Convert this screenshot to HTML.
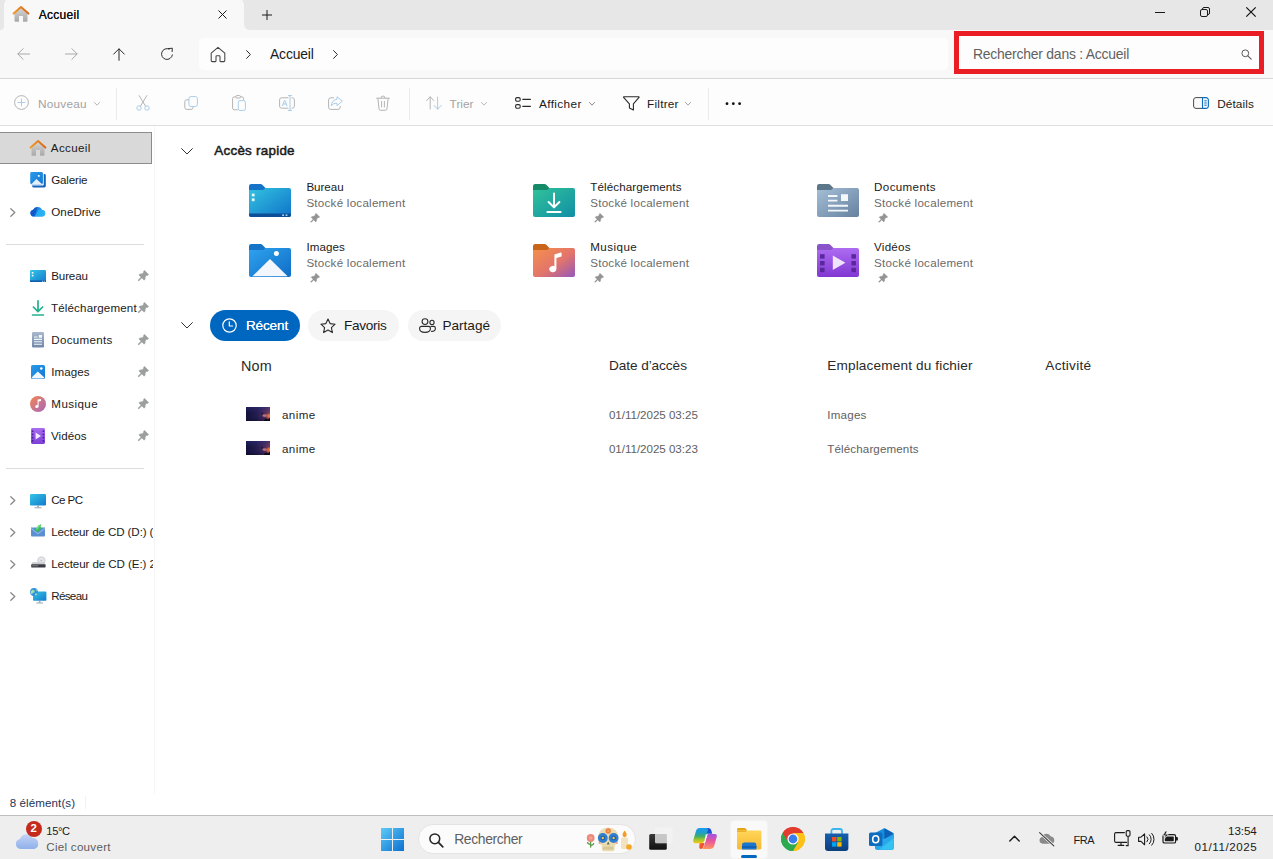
<!DOCTYPE html>
<html lang="fr">
<head>
<meta charset="utf-8">
<title>Accueil</title>
<style>
*{box-sizing:border-box;margin:0;padding:0}
html,body{width:1273px;height:859px;overflow:hidden;background:#fff}
body{font-family:"Liberation Sans",sans-serif;color:#1a1a1a;position:relative;font-size:12px}
.abs{position:absolute}
.t{position:absolute;white-space:nowrap;line-height:1}
svg{position:absolute;overflow:visible}
/* regions */
#titlebar{left:0;top:0;width:1273px;height:30px;background:#e7e7e7}
#tab{left:4px;top:-2px;width:240px;height:32px;background:#f8f8f8;border-radius:7px 7px 0 0}
#tabLs{left:0;top:25px;width:4px;height:5px;background:#f8f8f8}
#tabLc{left:-4px;top:20px;width:8px;height:9.5px;background:#e7e7e7;border-radius:0 0 4px 0}
#tabRs{left:244px;top:24px;width:6px;height:6px;background:#f8f8f8}
#tabRc{left:244px;top:17.5px;width:12px;height:12px;background:#e7e7e7;border-radius:0 0 0 6px}
#addr{left:0;top:30px;width:1273px;height:48px;background:#f8f8f8}
#addrline{left:0;top:78px;width:1273px;height:1px;background:#d6d6d6}
#addrbox{left:199px;top:38px;width:749px;height:31.5px;background:#fdfdfd;border-radius:5px}
#search{left:954px;top:31px;width:310px;height:43px;background:#ea1c24}
#searchin{left:959px;top:36px;width:300px;height:33.2px;background:#fdfdfd}
#cmd{left:0;top:79px;width:1273px;height:46px;background:#fdfdfd}
#cmdline{left:0;top:125px;width:1273px;height:1px;background:#dedede}
.vsep{position:absolute;width:1px;background:#ebebeb;top:88px;height:32px}
#nav{left:0;top:126px;width:153px;height:668px;background:#fff}
#navline{left:154px;top:126px;width:1px;height:670px;background:#f5f5f5}
#sel{left:0;top:132px;width:152px;height:32px;background:#d9d9d9;border:1px solid #8c8c8c;border-left:none}
.hsep{position:absolute;left:6px;width:138px;height:1px;background:#dcdcdc}
.ct{font-size:11.8px}
.mt{font-size:11.6px;color:#1a1a1a}
.st{font-size:11.6px;color:#6a6a6a}
.hd{font-size:13.6px;color:#2a2a2a}
.rt{font-size:11.6px;color:#616161}
.nt{font-size:11.6px;color:#1a1a1a}
#status{left:0;top:794px;width:1273px;height:20px;background:#fff}
#taskbar{left:0;top:816px;width:1273px;height:43px;background:#eeeeee}
#taskline{left:0;top:815px;width:1273px;height:1px;background:#bebebe}
</style>
</head>
<body>
<div class="abs" id="titlebar"></div>
<div class="abs" id="tab"></div>
<div class="abs" id="tabLs"></div><div class="abs" id="tabLc"></div>
<div class="abs" id="tabRs"></div><div class="abs" id="tabRc"></div>
<div class="abs" id="addr"></div>
<div class="abs" id="addrline"></div>
<div class="abs" id="addrbox"></div>
<div class="abs" id="search"></div><div class="abs" id="searchin"></div>
<div class="abs" id="cmd"></div>
<div class="abs" id="cmdline"></div>
<div class="abs" id="nav"></div>
<div class="abs" id="navline"></div>
<div class="abs" id="sel"></div>
<div class="abs" id="status"></div>
<div class="abs" id="taskline"></div>
<div class="abs" id="taskbar"></div>

<!-- TITLEBAR CONTENT -->
<svg style="left:12px;top:5px" width="18" height="18" viewBox="0 0 18 18">
  <defs><linearGradient id="hg" x1="0" y1="0" x2="0" y2="1"><stop offset="0" stop-color="#d6d6d6"/><stop offset="1" stop-color="#a9a9a9"/></linearGradient>
  <linearGradient id="ho" x1="0" y1="0" x2="1" y2="0"><stop offset="0" stop-color="#f09a2a"/><stop offset="1" stop-color="#d9661a"/></linearGradient></defs>
  <path d="M2.5 8.2 L9 2.6 L15.5 8.2 V16 a0.8 0.8 0 0 1 -0.8 0.8 H11 V11 H7 V16.8 H3.3 a0.8 0.8 0 0 1 -0.8 -0.8 Z" fill="url(#hg)"/>
  <path d="M1.6 8.6 L9 2.1 L16.4 8.6" fill="none" stroke="url(#ho)" stroke-width="2" stroke-linecap="round" stroke-linejoin="round"/>
</svg>
<div class="t" id="tabtxt" style="left:38.8px;top:9px;font-size:12px;color:#111;text-shadow:0 0 0.3px #111;letter-spacing:0.27px">Accueil</div>
<svg style="left:218px;top:10px" width="9" height="9" viewBox="0 0 9 9"><path d="M0.5 0.5 L8.5 8.5 M8.5 0.5 L0.5 8.5" stroke="#1a1a1a" stroke-width="1" fill="none"/></svg>
<svg style="left:262px;top:10px" width="10" height="10" viewBox="0 0 10 10"><path d="M5 0 V10 M0 5 H10" stroke="#1a1a1a" stroke-width="1" fill="none"/></svg>
<svg style="left:1155px;top:12px" width="10" height="1" viewBox="0 0 10 1"><path d="M0 0.5 H10" stroke="#1a1a1a" stroke-width="1"/></svg>
<svg style="left:1200px;top:7px" width="10" height="10" viewBox="0 0 10 10"><rect x="0.5" y="2.5" width="7" height="7" rx="1.5" fill="none" stroke="#1a1a1a"/><path d="M2.5 2.5 V2 a1.5 1.5 0 0 1 1.5 -1.5 H8 a1.5 1.5 0 0 1 1.5 1.5 V6 a1.5 1.5 0 0 1 -1.5 1.5 H7.5" fill="none" stroke="#1a1a1a"/></svg>
<svg style="left:1246px;top:7px" width="10" height="10" viewBox="0 0 10 10"><path d="M0.3 0.3 L9.7 9.7 M9.7 0.3 L0.3 9.7" stroke="#111" stroke-width="1.2" fill="none"/></svg>
<!-- ADDRESS CONTENT -->
<svg style="left:16.5px;top:47.5px" width="13" height="12" viewBox="0 0 13 12"><path d="M12.5 6 H1 M6.1 0.7 L0.8 6 L6.1 11.3" fill="none" stroke="#a8a8a8" stroke-width="1" stroke-linecap="round" stroke-linejoin="round"/></svg>
<svg style="left:64.5px;top:47.5px" width="13" height="12" viewBox="0 0 13 12"><path d="M0.5 6 H12 M6.9 0.7 L12.2 6 L6.9 11.3" fill="none" stroke="#a8a8a8" stroke-width="1" stroke-linecap="round" stroke-linejoin="round"/></svg>
<svg style="left:112.5px;top:48px" width="12" height="13" viewBox="0 0 12 13"><path d="M6 12.3 V1 M0.7 6.1 L6 0.8 L11.3 6.1" fill="none" stroke="#262626" stroke-width="1" stroke-linecap="round" stroke-linejoin="round"/></svg>
<svg style="left:160px;top:47px" width="14" height="14" viewBox="0 0 14 14"><path d="M12.4 7.9 A5.45 5.45 0 1 1 9.2 2" fill="none" stroke="#2e2e2e" stroke-width="1" stroke-linecap="round"/><path d="M8.4 1.6 L12.3 1.2 L12.1 4.6" fill="none" stroke="#2e2e2e" stroke-width="1" stroke-linecap="round" stroke-linejoin="round"/></svg>
<svg style="left:210px;top:46px" width="16" height="17" viewBox="0 0 16 17"><path d="M1.2 7.2 L8 1.4 L14.8 7.2 V14.6 a1 1 0 0 1 -1 1 H10.6 a0.6 0.6 0 0 1 -0.6 -0.6 V10.6 a0.8 0.8 0 0 0 -0.8 -0.8 H6.8 a0.8 0.8 0 0 0 -0.8 0.8 V15 a0.6 0.6 0 0 1 -0.6 0.6 H2.2 a1 1 0 0 1 -1 -1 Z" fill="none" stroke="#444" stroke-width="1.05" stroke-linejoin="round"/></svg>
<svg style="left:246px;top:50px" width="5" height="9" viewBox="0 0 5 9"><path d="M0.6 0.6 L4.4 4.5 L0.6 8.4" fill="none" stroke="#2a2a2a" stroke-width="1" stroke-linecap="round" stroke-linejoin="round"/></svg>
<div class="t" id="addrtxt" style="left:270.0px;top:48px;font-size:13.9px;color:#1a1a1a;letter-spacing:-0.15px">Accueil</div>
<svg style="left:333px;top:50px" width="5" height="9" viewBox="0 0 5 9"><path d="M0.6 0.6 L4.4 4.5 L0.6 8.4" fill="none" stroke="#2a2a2a" stroke-width="1" stroke-linecap="round" stroke-linejoin="round"/></svg>
<div class="t" id="srchtxt" style="left:973.0px;top:48px;font-size:13.9px;color:#616161;letter-spacing:-0.21px">Rechercher dans : Accueil</div>
<svg style="left:1240.5px;top:49px" width="11" height="11" viewBox="0 0 11 11"><circle cx="4.3" cy="4.3" r="3.4" fill="none" stroke="#5a5a5a" stroke-width="1"/><path d="M6.8 6.8 L10.2 10.2" stroke="#5a5a5a" stroke-width="1.1" stroke-linecap="round"/></svg>
<!-- COMMAND CONTENT -->
<svg style="left:14px;top:95px" width="15" height="15" viewBox="0 0 15 15"><circle cx="7.5" cy="7.5" r="6.9" fill="none" stroke="#b4b4b4" stroke-width="1"/><path d="M7.5 4 V11 M4 7.5 H11" stroke="#a9cdea" stroke-width="1" stroke-linecap="round"/></svg>
<div class="t ct" id="c1" style="left:37.9px;top:99px;color:#a3a3a3;letter-spacing:0.24px">Nouveau</div>
<svg class="chv" style="left:93.5px;top:101.5px" width="6" height="4" viewBox="0 0 6 4"><path d="M0.5 0.5 L3 3.2 L5.5 0.5" fill="none" stroke="#b0b0b0" stroke-width="0.9" stroke-linecap="round" stroke-linejoin="round"/></svg>
<div class="vsep" style="left:116px"></div>
<!-- cut -->
<svg style="left:136px;top:95px" width="14" height="16" viewBox="0 0 14 16"><path d="M3.2 0.6 L9.6 11.3 M10.8 0.6 L4.4 11.3" fill="none" stroke="#b4b4b4" stroke-width="1" stroke-linecap="round"/><circle cx="3" cy="13" r="2.2" fill="none" stroke="#a9cdea" stroke-width="1"/><circle cx="11" cy="13" r="2.2" fill="none" stroke="#a9cdea" stroke-width="1"/></svg>
<!-- copy -->
<svg style="left:184px;top:96px" width="14" height="14" viewBox="0 0 14 14"><path d="M4.6 3.8 H2.8 a2 2 0 0 0 -2 2 V11.4 a2 2 0 0 0 2 2 H7 a2 2 0 0 0 2 -2 V10.8" fill="none" stroke="#b4b4b4" stroke-width="1" stroke-linecap="round"/><rect x="4.9" y="0.6" width="8.5" height="9.9" rx="2" fill="none" stroke="#a9cdea" stroke-width="1"/></svg>
<!-- paste -->
<svg style="left:232px;top:95px" width="14" height="16" viewBox="0 0 14 16"><path d="M5.4 14.8 H2.3 a1.7 1.7 0 0 1 -1.7 -1.7 V3.6 a1.7 1.7 0 0 1 1.7 -1.7 H3.6 M8.6 1.9 H9.9 a1.7 1.7 0 0 1 1.7 1.7 V4.6" fill="none" stroke="#b4b4b4" stroke-width="1" stroke-linecap="round"/><rect x="3.7" y="0.6" width="4.8" height="2.4" rx="1.1" fill="none" stroke="#b4b4b4" stroke-width="1"/><rect x="6.3" y="5.6" width="7.1" height="9.8" rx="1.7" fill="none" stroke="#a9cdea" stroke-width="1"/></svg>
<!-- rename -->
<svg style="left:279px;top:95px" width="16" height="16" viewBox="0 0 16 16"><path d="M9 2.8 H2.6 a2 2 0 0 0 -2 2 V11.2 a2 2 0 0 0 2 2 H9 M13 2.8 H13.4 a2 2 0 0 1 2 2 V11.2 a2 2 0 0 1 -2 2 H13" fill="none" stroke="#b4b4b4" stroke-width="1" stroke-linecap="round"/><path d="M11 0.6 V15.4 M9.3 0.6 H12.7 M9.3 15.4 H12.7" fill="none" stroke="#a9cdea" stroke-width="1" stroke-linecap="round"/><path d="M3.4 10.8 L5.7 5.2 L8 10.8 M4.2 9 H7.2" fill="none" stroke="#a9cdea" stroke-width="1" stroke-linecap="round" stroke-linejoin="round"/></svg>
<!-- share -->
<svg style="left:328px;top:96px" width="15" height="14" viewBox="0 0 15 14"><path d="M5.6 1.8 H2.8 a2.2 2.2 0 0 0 -2.2 2.2 V11.2 a2.2 2.2 0 0 0 2.2 2.2 H10 a2.2 2.2 0 0 0 2.2 -2.2 V10.4" fill="none" stroke="#b4b4b4" stroke-width="1" stroke-linecap="round"/><path d="M9 0.7 L14.3 5.2 L9 9.7 V7.3 C6.2 7.1 4.4 8.1 3.2 10 C3.4 6.2 5.6 3.7 9 3.3 Z" fill="none" stroke="#a9cdea" stroke-width="1" stroke-linejoin="round"/></svg>
<!-- delete -->
<svg style="left:376px;top:95px" width="14" height="16" viewBox="0 0 14 16"><path d="M0.6 3.2 H13.4 M5 3 a2 2 0 0 1 4 0 M1.9 3.4 L3 13.8 a1.7 1.7 0 0 0 1.7 1.5 H9.3 a1.7 1.7 0 0 0 1.7 -1.5 L12.1 3.4 M5.6 6.4 V12 M8.4 6.4 V12" fill="none" stroke="#b4b4b4" stroke-width="1" stroke-linecap="round" stroke-linejoin="round"/></svg>
<div class="vsep" style="left:409px"></div>
<!-- sort -->
<svg style="left:426px;top:96px" width="16" height="14" viewBox="0 0 16 14"><path d="M4.2 13 V1 M0.6 4.6 L4.2 0.8 L7.8 4.6" fill="none" stroke="#b4b4b4" stroke-width="1" stroke-linecap="round" stroke-linejoin="round"/><path d="M11.6 1 V13 M8 9.4 L11.6 13.2 L15.2 9.4" fill="none" stroke="#a9cdea" stroke-width="1" stroke-linecap="round" stroke-linejoin="round"/></svg>
<div class="t ct" id="c2" style="left:449.6px;top:99px;color:#a3a3a3;letter-spacing:0.02px">Trier</div>
<svg class="chv" style="left:480.5px;top:101.5px" width="6" height="4" viewBox="0 0 6 4"><path d="M0.5 0.5 L3 3.2 L5.5 0.5" fill="none" stroke="#b0b0b0" stroke-width="0.9" stroke-linecap="round" stroke-linejoin="round"/></svg>
<!-- view -->
<svg style="left:515px;top:97px" width="16" height="12" viewBox="0 0 16 12"><rect x="0.6" y="0.6" width="4.6" height="3.6" rx="1.4" fill="none" stroke="#2a2a2a" stroke-width="1.1"/><rect x="0.6" y="7.6" width="4.6" height="3.6" rx="1.4" fill="none" stroke="#2a2a2a" stroke-width="1.1"/><path d="M7.8 2.4 H15.4 M7.8 9.4 H15.4" stroke="#2a2a2a" stroke-width="1.1" stroke-linecap="round"/></svg>
<div class="t ct" id="c3" style="left:539.1px;top:99px;color:#1a1a1a;letter-spacing:0.35px">Afficher</div>
<svg class="chv" style="left:588.5px;top:101.5px" width="6" height="4" viewBox="0 0 6 4"><path d="M0.5 0.5 L3 3.2 L5.5 0.5" fill="none" stroke="#7a7a7a" stroke-width="0.9" stroke-linecap="round" stroke-linejoin="round"/></svg>
<!-- filter -->
<svg style="left:623px;top:96px" width="17" height="15" viewBox="0 0 17 15"><path d="M0.9 0.7 H15.7 a0.4 0.4 0 0 1 0.3 0.7 L10.4 7.8 V14 L6.4 12 V7.8 L0.6 1.4 a0.4 0.4 0 0 1 0.3 -0.7 Z" fill="none" stroke="#2a2a2a" stroke-width="1.1" stroke-linejoin="round"/></svg>
<div class="t ct" id="c4" style="left:647.1px;top:99px;color:#1a1a1a;letter-spacing:0.21px">Filtrer</div>
<svg class="chv" style="left:685px;top:101.5px" width="6" height="4" viewBox="0 0 6 4"><path d="M0.5 0.5 L3 3.2 L5.5 0.5" fill="none" stroke="#9a9a9a" stroke-width="0.9" stroke-linecap="round" stroke-linejoin="round"/></svg>
<div class="vsep" style="left:708px"></div>
<svg style="left:725px;top:102px" width="17" height="4" viewBox="0 0 17 4"><circle cx="2" cy="1.7" r="1.4" fill="#111"/><circle cx="8.3" cy="1.7" r="1.4" fill="#111"/><circle cx="14.6" cy="1.7" r="1.4" fill="#111"/></svg>
<!-- details -->
<svg style="left:1193px;top:97px" width="16" height="12" viewBox="0 0 16 12"><path d="M9.5 0.6 H3 a2.4 2.4 0 0 0 -2.4 2.4 V9 a2.4 2.4 0 0 0 2.4 2.4 H9.5" fill="#fafafa" stroke="#4a4a4a" stroke-width="1"/><path d="M9.5 0.6 H13 a2.4 2.4 0 0 1 2.4 2.4 V9 a2.4 2.4 0 0 1 -2.4 2.4 H9.5 Z" fill="#f2f8fd" stroke="#0f6cbd" stroke-width="1.1"/><path d="M11.3 3.8 H13.7 M11.3 6 H13.7 M11.3 8.2 H13.7" stroke="#0f6cbd" stroke-width="1"/></svg>
<div class="t ct" id="c5" style="left:1217.2px;top:99px;color:#1a1a1a;letter-spacing:0.09px">Détails</div>
<!-- NAV CONTENT -->
<svg width="0" height="0" style="position:absolute"><defs>
<linearGradient id="gBlue" x1="0" y1="0" x2="1" y2="1"><stop offset="0" stop-color="#35c6e6"/><stop offset="1" stop-color="#1279cf"/></linearGradient>
<linearGradient id="gImg" x1="0" y1="0" x2="1" y2="1"><stop offset="0" stop-color="#2a9bea"/><stop offset="1" stop-color="#1276d2"/></linearGradient>
<linearGradient id="gMus" x1="0" y1="0" x2="1" y2="1"><stop offset="0" stop-color="#f4874c"/><stop offset="1" stop-color="#a665c4"/></linearGradient>
<linearGradient id="gVid" x1="0" y1="0" x2="0" y2="1"><stop offset="0" stop-color="#a86df0"/><stop offset="1" stop-color="#7b3fd6"/></linearGradient>
<linearGradient id="gDoc" x1="0" y1="0" x2="0" y2="1"><stop offset="0" stop-color="#a9b8cc"/><stop offset="1" stop-color="#7188a8"/></linearGradient>
<linearGradient id="gGrn" x1="0" y1="0" x2="1" y2="1"><stop offset="0" stop-color="#2cc09a"/><stop offset="1" stop-color="#128a78"/></linearGradient>
<linearGradient id="gCloud2" x1="0" y1="0" x2="1" y2="0"><stop offset="0" stop-color="#1466d8"/><stop offset="1" stop-color="#2aa8f2"/></linearGradient><linearGradient id="gCloud" x1="0" y1="0" x2="1" y2="1"><stop offset="0" stop-color="#1b6fdc"/><stop offset="1" stop-color="#35b3f5"/></linearGradient>
<symbol id="pin" viewBox="0 0 11 11"><path d="M6.4 0.3 L10.7 4.6 L9.7 5.5 L8.9 5.2 L7.2 6.9 L7.1 9.2 L6.1 10.2 L0.8 4.9 L1.8 3.9 L4.1 3.8 L5.8 2.1 L5.5 1.3 Z" fill="#9b9fa0" stroke="#9b9fa0" stroke-width="0.4" stroke-linejoin="round"/><path d="M0.7 10.3 L4 7" stroke="#9b9fa0" stroke-width="1.5" stroke-linecap="round"/></symbol>
<symbol id="nchev" viewBox="0 0 6 9"><path d="M0.8 0.7 L4.8 4.5 L0.8 8.3" fill="none" stroke="#8a8a8a" stroke-width="1.3" stroke-linecap="round" stroke-linejoin="round"/></symbol>
<symbol id="ihome" viewBox="0 0 18 18"><path d="M2.5 8.2 L9 2.6 L15.5 8.2 V16 a0.8 0.8 0 0 1 -0.8 0.8 H11 V11 H7 V16.8 H3.3 a0.8 0.8 0 0 1 -0.8 -0.8 Z" fill="url(#hg)"/><path d="M1.6 8.6 L9 2.1 L16.4 8.6" fill="none" stroke="url(#ho)" stroke-width="2" stroke-linecap="round" stroke-linejoin="round"/></symbol>
</defs></svg>
<div class="hsep" style="top:244px"></div><div class="hsep" style="top:468px"></div>
<div class="abs" id="navclip" style="left:0;top:126px;width:152.5px;height:668px;overflow:hidden">
<div class="t nt" id="n1" style="left:50.8px;top:15.6px;letter-spacing:0.37px">Accueil</div>
<div class="t nt" id="n2" style="left:51.3px;top:47.6px;letter-spacing:-0.20px">Galerie</div>
<div class="t nt" id="n3" style="left:51.3px;top:79.6px;letter-spacing:0.06px">OneDrive</div>
<div class="t nt" id="n4" style="left:51.3px;top:143.6px;letter-spacing:-0.16px">Bureau</div>
<div class="t nt" id="n5" style="left:51.0px;top:175.6px;letter-spacing:0.14px">Téléchargement</div>
<div class="t nt" id="n6" style="left:51.3px;top:207.6px;letter-spacing:0.31px">Documents</div>
<div class="t nt" id="n7" style="left:51.3px;top:239.6px;letter-spacing:0.03px">Images</div>
<div class="t nt" id="n8" style="left:51.3px;top:271.6px;letter-spacing:0.43px">Musique</div>
<div class="t nt" id="n9" style="left:51.0px;top:303.6px;letter-spacing:0.07px">Vidéos</div>
<div class="t nt" id="n10" style="left:51.2px;top:367.6px;letter-spacing:-0.56px">Ce PC</div>
<div class="t nt" id="n11" style="left:51.2px;top:399.6px;letter-spacing:-0.11px">Lecteur de CD (D:) (</div>
<div class="t nt" id="n12" style="left:51.2px;top:431.6px;letter-spacing:-0.08px">Lecteur de CD (E:) 2</div>
<div class="t nt" id="n13" style="left:51.2px;top:463.6px;letter-spacing:-0.65px">Réseau</div>
</div>
<svg style="left:138px;top:269.8px" width="11" height="11"><use href="#pin"/></svg>
<svg style="left:138px;top:301.8px" width="11" height="11"><use href="#pin"/></svg>
<svg style="left:138px;top:333.8px" width="11" height="11"><use href="#pin"/></svg>
<svg style="left:138px;top:365.8px" width="11" height="11"><use href="#pin"/></svg>
<svg style="left:138px;top:397.8px" width="11" height="11"><use href="#pin"/></svg>
<svg style="left:138px;top:429.8px" width="11" height="11"><use href="#pin"/></svg>
<svg style="left:10px;top:208.0px" width="6" height="9"><use href="#nchev"/></svg>
<svg style="left:10px;top:496.0px" width="6" height="9"><use href="#nchev"/></svg>
<svg style="left:10px;top:528.0px" width="6" height="9"><use href="#nchev"/></svg>
<svg style="left:10px;top:560.0px" width="6" height="9"><use href="#nchev"/></svg>
<svg style="left:10px;top:592.0px" width="6" height="9"><use href="#nchev"/></svg>
<svg style="left:29px;top:139px" width="18" height="18"><use href="#ihome"/></svg>
<!-- gallery -->
<svg style="left:30px;top:172px" width="16" height="16" viewBox="0 0 16 16"><rect x="2.1" y="2.1" width="13.7" height="13.4" rx="1.4" fill="#1663bd"/><rect x="1.4" y="1.6" width="12.4" height="12" rx="1" fill="#e8f1fb"/><rect x="0.2" y="0" width="12.7" height="12.2" rx="1.4" fill="url(#gImg)"/><path d="M1.6 12 L6.4 7 L12.2 12.2 H1.8 Z" fill="#e4effa"/><rect x="7.9" y="3" width="1.9" height="1.8" rx="0.4" fill="#eaf6ff"/></svg>
<!-- onedrive -->
<svg style="left:30px;top:206.2px" width="16" height="11" viewBox="0 0 16 11"><path d="M3.8 10.6 a3.5 3.5 0 0 1 -0.7 -6.9 a4.9 4.9 0 0 1 9 0.4 a3.3 3.3 0 0 1 0.6 6.5 Z" fill="url(#gCloud2)"/><path d="M0.6 8.6 a3.5 3.5 0 0 1 2.5 -4.9 a4.9 4.9 0 0 1 4.4 -2.6 L4.6 10.6 H3.8 a3.5 3.5 0 0 1 -3.2 -2 Z" fill="#0f52c4" opacity="0.75"/><path d="M4.8 10.6 L8.6 3.8 a4 4 0 0 1 3.5 0.3 a3.3 3.3 0 0 1 0.6 6.5 Z" fill="#2bb6f6" opacity="0.8"/></svg>
<!-- bureau -->
<svg style="left:30px;top:270px" width="16" height="12" viewBox="0 0 16 12"><rect x="0" y="0" width="16" height="12" rx="1.2" fill="url(#gBlue)"/><rect x="0" y="10.4" width="16" height="1.6" fill="#0f5fae"/><rect x="1.8" y="2" width="1.6" height="1.6" fill="#fff"/><rect x="1.8" y="4.8" width="1.6" height="1.6" fill="#fff"/><rect x="12" y="10.8" width="1" height="0.9" fill="#bfe3f7"/><rect x="13.8" y="10.8" width="1" height="0.9" fill="#bfe3f7"/></svg>
<!-- download -->
<svg style="left:32px;top:300px" width="12" height="16" viewBox="0 0 12 16"><path d="M6 0.8 V11.4 M1.4 7 L6 11.6 L10.6 7" fill="none" stroke="#21b08c" stroke-width="1.7" stroke-linecap="round" stroke-linejoin="round"/><path d="M0.6 15 H11.4" stroke="#21b08c" stroke-width="1.7" stroke-linecap="round"/></svg>
<!-- documents -->
<svg style="left:32px;top:332.3px" width="12" height="15.5" viewBox="0 0 12 15.5"><rect x="0" y="0" width="12" height="15.5" rx="1.2" fill="url(#gDoc)"/><path d="M2 5 H5.6 M2 7.4 H10 M2 9.8 H10 M2 12.2 H10" stroke="#f2f5f9" stroke-width="1.1"/><rect x="6.8" y="3" width="3.2" height="2.8" fill="#f2f5f9"/></svg>
<!-- images -->
<svg style="left:31px;top:365px" width="14" height="14" viewBox="0 0 14 14"><rect x="0" y="0" width="14" height="14" rx="1.6" fill="url(#gImg)"/><path d="M0.6 12.6 L6.8 6.4 L13.4 12.6 a1.2 1.2 0 0 1 -1 0.8 H1.6 a1.2 1.2 0 0 1 -1 -0.8 Z" fill="#f2f8fe"/><circle cx="10.3" cy="3.5" r="1.3" fill="#fff"/></svg>
<!-- music -->
<svg style="left:30px;top:396px" width="16" height="16" viewBox="0 0 16 16"><circle cx="8" cy="8" r="8" fill="url(#gMus)"/><path d="M7.6 3.6 L11 3 V5 L8.6 5.5 V10.6 a1.7 1.5 0 1 1 -1 -1.4 Z" fill="#fff"/></svg>
<!-- videos -->
<svg style="left:31px;top:428px" width="14" height="16" viewBox="0 0 14 16"><rect x="0" y="0" width="14" height="16" rx="1.4" fill="url(#gVid)"/><path d="M4.6 4.6 L10 8 L4.6 11.4 Z" fill="#f3eaff"/><g fill="#4b1fa0"><rect x="0.8" y="2.4" width="1.6" height="1.6"/><rect x="0.8" y="5.6" width="1.6" height="1.6"/><rect x="0.8" y="8.8" width="1.6" height="1.6"/><rect x="0.8" y="12" width="1.6" height="1.6"/><rect x="11.6" y="2.4" width="1.6" height="1.6"/><rect x="11.6" y="5.6" width="1.6" height="1.6"/><rect x="11.6" y="8.8" width="1.6" height="1.6"/><rect x="11.6" y="12" width="1.6" height="1.6"/></g></svg>
<!-- ce pc -->
<svg style="left:30px;top:493.5px" width="16" height="14.5" viewBox="0 0 16 14.5"><rect x="0" y="0" width="16" height="11.4" rx="1.2" fill="url(#gBlue)"/><rect x="7.2" y="11.4" width="1.6" height="2" fill="#9aa5b1"/><rect x="4.4" y="13.2" width="7.2" height="1.1" rx="0.5" fill="#9aa5b1"/></svg>
<!-- cd D -->
<svg style="left:31px;top:523.5px" width="14" height="12.5" viewBox="0 0 14 12.5"><path d="M0 3.4 H14 V11.4 a1 1 0 0 1 -1 1 H1 a1 1 0 0 1 -1 -1 Z" fill="#5a8fd0"/><path d="M0 3.4 L7 9 L14 3.4 V5 L7 10.4 L0 5 Z" fill="#88b3e6"/><path d="M10.4 0.2 L9.4 3 L10.4 3.6 L6.6 8.2 L3.4 5.6 L5 5.2 L7.2 1.6 Z" fill="#30c24a"/><path d="M10.4 0.2 L7.2 1.6 L5 5.2 L6.4 5.6 Z" fill="#77e07f"/></svg>
<!-- cd E -->
<svg style="left:31px;top:556px" width="15" height="12" viewBox="0 0 15 12"><circle cx="10.4" cy="4.4" r="4.2" fill="#d6d8db"/><circle cx="10.4" cy="4.4" r="2.4" fill="#eceef0"/><circle cx="10.4" cy="4.4" r="1" fill="#b5b8bc"/><path d="M1.4 6.2 H13.4 L14.4 8.4 H0.4 Z" fill="#c9ccd0"/><rect x="0.2" y="8.2" width="14.4" height="3.2" rx="0.6" fill="#3a3d42"/><rect x="1.2" y="9.4" width="6" height="0.8" fill="#8d9197"/></svg>
<!-- reseau -->
<svg style="left:30px;top:588px" width="17" height="16" viewBox="0 0 17 16"><rect x="3" y="3.6" width="13.4" height="9.2" rx="1" fill="url(#gBlue)"/><rect x="8.9" y="12.8" width="1.6" height="1.8" fill="#9aa5b1"/><rect x="6.2" y="14.4" width="7" height="1.1" rx="0.5" fill="#9aa5b1"/><circle cx="4" cy="4" r="3.9" fill="#2f8fe0"/><path d="M1.4 2.4 C2.6 1.2 4 2.2 4.6 3 C5.2 3.8 4.4 4.6 3.4 4.8 C2.4 5 2.6 6.2 1.6 6.4 C0.6 5.4 0.4 3.6 1.4 2.4 Z M5.4 0.8 C6.6 1.2 7.4 2.2 7.6 3.2 C6.8 3.2 6 2.6 5.4 0.8 Z M5.2 5.6 C6 5.2 7 5.4 7.4 5.8 C7 6.8 6.2 7.4 5.4 7.6 C4.8 7 4.8 6 5.2 5.6 Z" fill="#9fe0a8"/></svg>
<!-- MAIN CONTENT -->
<svg width="0" height="0" style="position:absolute"><defs>
<linearGradient id="fBur" x1="0" y1="0" x2="1" y2="1"><stop offset="0" stop-color="#33c3e0"/><stop offset="1" stop-color="#0f73c9"/></linearGradient>
<linearGradient id="fImg" x1="0" y1="0" x2="1" y2="1"><stop offset="0" stop-color="#2fa3ee"/><stop offset="1" stop-color="#0f6cc6"/></linearGradient>
<linearGradient id="fDl" x1="0" y1="0" x2="1" y2="1"><stop offset="0" stop-color="#30c39a"/><stop offset="1" stop-color="#128ea6"/></linearGradient>
<linearGradient id="fMus" x1="0" y1="0" x2="1" y2="1"><stop offset="0" stop-color="#f5914a"/><stop offset="0.55" stop-color="#e2746b"/><stop offset="1" stop-color="#9458bd"/></linearGradient>
<linearGradient id="fDoc" x1="0" y1="0" x2="1" y2="1"><stop offset="0" stop-color="#a6bfd8"/><stop offset="1" stop-color="#65819f"/></linearGradient>
<linearGradient id="fVid" x1="0" y1="0" x2="0" y2="1"><stop offset="0" stop-color="#ad6cf2"/><stop offset="1" stop-color="#8138d2"/></linearGradient>
<symbol id="fpin" viewBox="0 0 11 11"><path d="M6.4 0.3 L10.7 4.6 L9.7 5.5 L8.9 5.2 L7.2 6.9 L7.1 9.2 L6.1 10.2 L0.8 4.9 L1.8 3.9 L4.1 3.8 L5.8 2.1 L5.5 1.3 Z" fill="#949494" stroke="#949494" stroke-width="0.4" stroke-linejoin="round"/><path d="M0.7 10.3 L4 7" stroke="#949494" stroke-width="1.5" stroke-linecap="round"/></symbol>
<symbol id="fbody" viewBox="0 0 42 33"><path d="M0 2 a2 2 0 0 1 2 -2 H11.6 a2.4 2.4 0 0 1 1.8 0.8 L16 4 H0 Z"/></symbol>
<linearGradient id="thumb" x1="0" y1="0" x2="1" y2="0"><stop offset="0" stop-color="#120f36"/><stop offset="0.45" stop-color="#221d4e"/><stop offset="0.75" stop-color="#4a2a5e"/><stop offset="1" stop-color="#80405a"/></linearGradient><linearGradient id="thumbv" x1="0" y1="0" x2="0" y2="1"><stop offset="0" stop-color="#2c2c78" stop-opacity="0.55"/><stop offset="0.5" stop-color="#2c2c78" stop-opacity="0"/><stop offset="1" stop-color="#0a0820" stop-opacity="0.45"/></linearGradient><radialGradient id="thglow"><stop offset="0" stop-color="#f58a42"/><stop offset="0.5" stop-color="#e06a40" stop-opacity="0.8"/><stop offset="1" stop-color="#c04a40" stop-opacity="0"/></radialGradient>
</defs></svg>
<svg style="left:180.5px;top:147.5px" width="12" height="7" viewBox="0 0 12 7"><path d="M0.6 0.6 L6 6 L11.4 0.6" fill="none" stroke="#333" stroke-width="1" stroke-linecap="round" stroke-linejoin="round"/></svg>
<div class="t" id="h1" style="left:214.3px;top:144px;font-size:13.4px;color:#1a1a1a;-webkit-text-stroke:0.5px #1a1a1a;letter-spacing:0.26px">Accès rapide</div>
<svg style="left:249px;top:184px" width="42" height="33" viewBox="0 0 42 33"><path d="M0 2.2 a2.2 2.2 0 0 1 2.2 -2.2 H11.4 a2.6 2.6 0 0 1 1.9 0.8 L16.4 4 H0 Z" fill="#1674c8"/><path d="M0 6 a2 2 0 0 1 2 -2 H40 a2 2 0 0 1 2 2 V31 a2 2 0 0 1 -2 2 H2 a2 2 0 0 1 -2 -2 Z" fill="url(#fBur)"/><path d="M0 4 H16.4 L14.8 5.4 a2.4 2.4 0 0 1 -1.6 0.6 H0 Z" fill="#1674c8"/><path d="M0 29.6 H42 V31 a2 2 0 0 1 -2 2 H2 a2 2 0 0 1 -2 -2 Z" fill="#0d4f96"/><rect x="2.8" y="9.6" width="2.8" height="2.8" fill="#e9f8fd"/><rect x="2.8" y="14.4" width="2.8" height="2.8" fill="#e9f8fd"/><rect x="33.2" y="30.4" width="1.8" height="1.6" fill="#9fd3f2"/><rect x="36.6" y="30.4" width="1.8" height="1.6" fill="#9fd3f2"/></svg>
<div class="t mt" id="m1" style="left:306.4px;top:180.6px;letter-spacing:-0.02px">Bureau</div>
<div class="t st" id="m1s" style="left:306.4px;top:197.4px;letter-spacing:0.25px">Stocké localement</div>
<svg style="left:310px;top:213.2px" width="10.4" height="9.6"><use href="#fpin"/></svg>
<svg style="left:533px;top:184px" width="42" height="33" viewBox="0 0 42 33"><path d="M0 2.2 a2.2 2.2 0 0 1 2.2 -2.2 H11.4 a2.6 2.6 0 0 1 1.9 0.8 L16.4 4 H0 Z" fill="#158a68"/><path d="M0 6 a2 2 0 0 1 2 -2 H40 a2 2 0 0 1 2 2 V31 a2 2 0 0 1 -2 2 H2 a2 2 0 0 1 -2 -2 Z" fill="url(#fDl)"/><path d="M0 4 H16.4 L14.8 5.4 a2.4 2.4 0 0 1 -1.6 0.6 H0 Z" fill="#158a68"/><path d="M21 9.4 V23 M15.6 18 L21 23.4 L26.4 18" fill="none" stroke="#fff" stroke-width="2" stroke-linecap="round" stroke-linejoin="round"/><path d="M14.4 28 H27.6" stroke="#fff" stroke-width="2" stroke-linecap="round"/></svg>
<div class="t mt" id="m2" style="left:590.2px;top:180.6px;letter-spacing:0.12px">Téléchargements</div>
<div class="t st" id="m2s" style="left:590.2px;top:197.4px;letter-spacing:0.25px">Stocké localement</div>
<svg style="left:594px;top:213.2px" width="10.4" height="9.6"><use href="#fpin"/></svg>
<svg style="left:817px;top:184px" width="42" height="33" viewBox="0 0 42 33"><path d="M0 2.2 a2.2 2.2 0 0 1 2.2 -2.2 H11.4 a2.6 2.6 0 0 1 1.9 0.8 L16.4 4 H0 Z" fill="#5c7789"/><path d="M0 6 a2 2 0 0 1 2 -2 H40 a2 2 0 0 1 2 2 V31 a2 2 0 0 1 -2 2 H2 a2 2 0 0 1 -2 -2 Z" fill="url(#fDoc)"/><path d="M0 4 H16.4 L14.8 5.4 a2.4 2.4 0 0 1 -1.6 0.6 H0 Z" fill="#5c7789"/><path d="M11 12 H20.4 M11 16.6 H20.4 M11 21.8 H31 M11 26.6 H31" stroke="#f4f7fa" stroke-width="1.9"/><rect x="24" y="10.2" width="7" height="6.8" fill="#f4f7fa"/></svg>
<div class="t mt" id="m3" style="left:874.1px;top:180.6px;letter-spacing:0.36px">Documents</div>
<div class="t st" id="m3s" style="left:874.1px;top:197.4px;letter-spacing:0.26px">Stocké localement</div>
<svg style="left:878px;top:213.2px" width="10.4" height="9.6"><use href="#fpin"/></svg>
<svg style="left:249px;top:244px" width="42" height="33" viewBox="0 0 42 33"><path d="M0 2.2 a2.2 2.2 0 0 1 2.2 -2.2 H11.4 a2.6 2.6 0 0 1 1.9 0.8 L16.4 4 H0 Z" fill="#1674c8"/><path d="M0 6 a2 2 0 0 1 2 -2 H40 a2 2 0 0 1 2 2 V31 a2 2 0 0 1 -2 2 H2 a2 2 0 0 1 -2 -2 Z" fill="url(#fImg)"/><path d="M0 4 H16.4 L14.8 5.4 a2.4 2.4 0 0 1 -1.6 0.6 H0 Z" fill="#1674c8"/><path d="M3.4 32.2 L21 15 L38.6 32.2 Z" fill="#f1f7fd"/><circle cx="27.4" cy="9.6" r="2.5" fill="#fff"/><path d="M0 31 a2 2 0 0 0 2 2 H40 a2 2 0 0 0 2 -2 V32 H0Z" fill="#0f6cc6" opacity="0"/></svg>
<div class="t mt" id="m4" style="left:306.4px;top:240.6px;letter-spacing:0.09px">Images</div>
<div class="t st" id="m4s" style="left:306.4px;top:257.4px;letter-spacing:0.25px">Stocké localement</div>
<svg style="left:310px;top:273.2px" width="10.4" height="9.6"><use href="#fpin"/></svg>
<svg style="left:533px;top:244px" width="42" height="33" viewBox="0 0 42 33"><path d="M0 2.2 a2.2 2.2 0 0 1 2.2 -2.2 H11.4 a2.6 2.6 0 0 1 1.9 0.8 L16.4 4 H0 Z" fill="#c8651a"/><path d="M0 6 a2 2 0 0 1 2 -2 H40 a2 2 0 0 1 2 2 V31 a2 2 0 0 1 -2 2 H2 a2 2 0 0 1 -2 -2 Z" fill="url(#fMus)"/><path d="M0 4 H16.4 L14.8 5.4 a2.4 2.4 0 0 1 -1.6 0.6 H0 Z" fill="#c8651a"/><path d="M21.4 10.4 L27.6 8.6 a0.8 0.8 0 0 1 1 0.8 V12.6 L23.4 14 V25 a3.6 3.2 0 1 1 -2 -2.8 Z" fill="#fff"/></svg>
<div class="t mt" id="m5" style="left:590.2px;top:240.6px;letter-spacing:0.46px">Musique</div>
<div class="t st" id="m5s" style="left:590.2px;top:257.4px;letter-spacing:0.25px">Stocké localement</div>
<svg style="left:594px;top:273.2px" width="10.4" height="9.6"><use href="#fpin"/></svg>
<svg style="left:817px;top:244px" width="42" height="33" viewBox="0 0 42 33"><path d="M0 2.2 a2.2 2.2 0 0 1 2.2 -2.2 H11.4 a2.6 2.6 0 0 1 1.9 0.8 L16.4 4 H0 Z" fill="#8a54c8"/><path d="M0 6 a2 2 0 0 1 2 -2 H40 a2 2 0 0 1 2 2 V31 a2 2 0 0 1 -2 2 H2 a2 2 0 0 1 -2 -2 Z" fill="url(#fVid)"/><path d="M0 4 H16.4 L14.8 5.4 a2.4 2.4 0 0 1 -1.6 0.6 H0 Z" fill="#8a54c8"/><path d="M15.8 11.6 L28.4 18.8 L15.8 26 Z" fill="#efe4fb"/><g fill="#5a289c"><rect x="3" y="10.2" width="4.6" height="4.4"/><rect x="3" y="17" width="4.6" height="4.4"/><rect x="3" y="23.8" width="4.6" height="4.4"/><rect x="34.4" y="10.2" width="4.6" height="4.4"/><rect x="34.4" y="17" width="4.6" height="4.4"/><rect x="34.4" y="23.8" width="4.6" height="4.4"/></g></svg>
<div class="t mt" id="m6" style="left:874.1px;top:240.6px;letter-spacing:0.23px">Vidéos</div>
<div class="t st" id="m6s" style="left:874.1px;top:257.4px;letter-spacing:0.26px">Stocké localement</div>
<svg style="left:878px;top:273.2px" width="10.4" height="9.6"><use href="#fpin"/></svg>
<svg style="left:180.5px;top:322px" width="12" height="7" viewBox="0 0 12 7"><path d="M0.6 0.6 L6 6 L11.4 0.6" fill="none" stroke="#333" stroke-width="1" stroke-linecap="round" stroke-linejoin="round"/></svg>
<div class="abs" style="left:210.4px;top:310px;width:89.4px;height:31px;border-radius:15.5px;background:#0067c0"></div>
<svg style="left:222px;top:318px" width="15" height="15" viewBox="0 0 15 15"><circle cx="7.5" cy="7.5" r="6.7" fill="none" stroke="#fff" stroke-width="1.2"/><path d="M7.3 3.8 V8 H10.6" fill="none" stroke="#fff" stroke-width="1.2" stroke-linecap="round" stroke-linejoin="round"/></svg>
<div class="t" id="ch1" style="left:245.9px;top:318.6px;font-size:13.6px;color:#fff;text-shadow:0 0 0.4px #fff;letter-spacing:-0.16px">Récent</div>
<div class="abs" style="left:308.3px;top:310px;width:90.5px;height:31px;border-radius:15.5px;background:#f5f5f5"></div>
<svg style="left:320px;top:317.5px" width="16" height="16" viewBox="0 0 16 16"><path d="M8 1 L10.1 5.6 L15.1 6.2 L11.4 9.6 L12.4 14.6 L8 12.1 L3.6 14.6 L4.6 9.6 L0.9 6.2 L5.9 5.6 Z" fill="none" stroke="#2a2a2a" stroke-width="1.1" stroke-linejoin="round"/></svg>
<div class="t" id="ch2" style="left:344.1px;top:318.6px;font-size:13.6px;color:#1a1a1a;letter-spacing:-0.30px">Favoris</div>
<div class="abs" style="left:407.8px;top:310px;width:93.5px;height:31px;border-radius:15.5px;background:#f5f5f5"></div>
<svg style="left:418.5px;top:318px" width="17" height="15" viewBox="0 0 17 15"><circle cx="6" cy="3.6" r="2.9" fill="none" stroke="#2a2a2a" stroke-width="1.1"/><circle cx="13" cy="4.4" r="2.1" fill="none" stroke="#2a2a2a" stroke-width="1.1"/><path d="M2.6 8.4 H9.4 a2 2 0 0 1 2 2 V10.8 C11.4 13 9.4 14.4 6 14.4 C2.6 14.4 0.6 13 0.6 10.8 V10.4 a2 2 0 0 1 2 -2 Z" fill="none" stroke="#2a2a2a" stroke-width="1.1"/><path d="M12 8.4 H14.6 a1.8 1.8 0 0 1 1.8 1.8 C16.4 12 15 13.4 12.6 13.4" fill="none" stroke="#2a2a2a" stroke-width="1.1" stroke-linecap="round"/></svg>
<div class="t" id="ch3" style="left:442.5px;top:318.6px;font-size:13.6px;color:#1a1a1a;letter-spacing:-0.02px">Partagé</div>
<div class="t hd" id="hd1" style="left:241.0px;font-size:14.4px;top:359.4px;letter-spacing:0.15px">Nom</div>
<div class="t hd" id="hd2" style="left:608.9px;top:359.4px;letter-spacing:-0.05px">Date d’accès</div>
<div class="t hd" id="hd3" style="left:827.3px;top:359.4px;letter-spacing:0.15px">Emplacement du fichier</div>
<div class="t hd" id="hd4" style="left:1045.3px;top:359.4px;letter-spacing:0.28px">Activité</div>
<svg style="left:246px;top:407px;overflow:hidden" width="24" height="14" viewBox="0 0 24 14"><rect width="24" height="14" fill="url(#thumb)"/><rect width="24" height="14" fill="url(#thumbv)"/><ellipse cx="23.6" cy="9" rx="4.6" ry="3.6" fill="url(#thglow)"/><ellipse cx="18.6" cy="8.6" rx="2.2" ry="1.3" fill="#d48a80" opacity="0.75"/><circle cx="16.2" cy="6.6" r="0.9" fill="#1a1030" opacity="0.8"/><path d="M18 13 L20 11.6 L22 12.6 L24 10.6 V14 H18 Z" fill="#07060f" opacity="0.85"/></svg>
<svg style="left:246px;top:441px;overflow:hidden" width="24" height="14" viewBox="0 0 24 14"><rect width="24" height="14" fill="url(#thumb)"/><rect width="24" height="14" fill="url(#thumbv)"/><ellipse cx="23.6" cy="9" rx="4.6" ry="3.6" fill="url(#thglow)"/><ellipse cx="18.6" cy="8.6" rx="2.2" ry="1.3" fill="#d48a80" opacity="0.75"/><circle cx="16.2" cy="6.6" r="0.9" fill="#1a1030" opacity="0.8"/><path d="M18 13 L20 11.6 L22 12.6 L24 10.6 V14 H18 Z" fill="#07060f" opacity="0.85"/></svg>
<div class="t rt" id="r1a" style="left:281.9px;top:409.2px;color:#262626;letter-spacing:0.46px">anime</div>
<div class="t rt" id="r1b" style="left:608.9px;top:409.2px;letter-spacing:-0.03px">01/11/2025 03:25</div>
<div class="t rt" id="r1c" style="left:827.3px;top:409.2px;letter-spacing:0.21px">Images</div>
<div class="t rt" id="r2a" style="left:281.9px;top:443.2px;color:#262626;letter-spacing:0.46px">anime</div>
<div class="t rt" id="r2b" style="left:608.9px;top:443.2px;letter-spacing:-0.03px">01/11/2025 03:23</div>
<div class="t rt" id="r2c" style="left:827.3px;top:443.2px;letter-spacing:0.12px">Téléchargements</div>
<!-- STATUS CONTENT -->
<div class="t" id="st1" style="left:9.7px;top:796.6px;font-size:11.6px;color:#1f3558;letter-spacing:0.09px">8 élément(s)</div>
<div class="abs" style="left:85px;top:796px;width:1px;height:13px;background:#f2f2f2"></div>
<!-- TASKBAR CONTENT -->
<svg width="0" height="0" style="position:absolute"><defs>
<linearGradient id="tCloud" x1="0" y1="0" x2="0" y2="1"><stop offset="0" stop-color="#c4d4f6"/><stop offset="1" stop-color="#8fb0ea"/></linearGradient>
<linearGradient id="tWin" x1="0" y1="0" x2="1" y2="1"><stop offset="0" stop-color="#5ccbf8"/><stop offset="1" stop-color="#0b6fd0"/></linearGradient>
<linearGradient id="tFold" x1="0" y1="0" x2="0" y2="1"><stop offset="0" stop-color="#ffd65a"/><stop offset="1" stop-color="#f7b930"/></linearGradient>
<linearGradient id="tCop1" x1="0" y1="0" x2="0" y2="1"><stop offset="0" stop-color="#1a9cf0"/><stop offset="0.3" stop-color="#1e9fc8"/><stop offset="0.55" stop-color="#3fae6a"/><stop offset="0.75" stop-color="#9cc42e"/><stop offset="1" stop-color="#f4c81c"/></linearGradient>
<linearGradient id="tCop2" x1="0" y1="0" x2="0" y2="1"><stop offset="0" stop-color="#a352e6"/><stop offset="0.45" stop-color="#e4579e"/><stop offset="0.8" stop-color="#f87c78"/><stop offset="1" stop-color="#fa9c5c"/></linearGradient>
<linearGradient id="tStore" x1="0" y1="0" x2="0" y2="1"><stop offset="0" stop-color="#1560b0"/><stop offset="1" stop-color="#0c3f7c"/></linearGradient>
<linearGradient id="tTv" x1="0" y1="0" x2="0" y2="1"><stop offset="0" stop-color="#3a3a3a"/><stop offset="1" stop-color="#111"/></linearGradient>
</defs></svg>
<!-- weather -->
<svg style="left:14.5px;top:833px" width="25" height="16.5" viewBox="0 0 25 16.5"><path d="M5.6 16 a5 5 0 0 1 -0.6 -9.9 a6.6 6.6 0 0 1 12.4 -1 a5.6 5.6 0 0 1 2 10.9 Z" fill="url(#tCloud)"/></svg>
<div class="abs" style="left:26px;top:821px;width:16px;height:16px;border-radius:8px;background:#c42b1c"></div>
<div class="t" style="left:30.6px;top:823.4px;font-size:11.4px;color:#fff;font-weight:bold">2</div>
<div class="t" id="w1" style="left:46.3px;top:826.4px;font-size:11.1px;color:#1a1a1a;letter-spacing:-0.33px">15°C</div>
<div class="t" id="w2" style="left:46.3px;top:840.8px;font-size:11.6px;color:#5c5c5c;letter-spacing:0.27px">Ciel couvert</div>
<!-- start -->
<svg style="left:381px;top:828px" width="23" height="23" viewBox="0 0 23 23"><path d="M0 0 H11 V11 H0 Z M12 0 H23 V11 H12 Z M0 12 H11 V23 H0 Z M12 12 H23 V23 H12 Z" fill="url(#tWin)"/></svg>
<!-- search pill -->
<div class="abs" style="left:418px;top:823.5px;width:218px;height:30.5px;border-radius:15.5px;background:#fbfbfb;border:1px solid #e4e4e4"></div>
<svg style="left:429px;top:833px" width="15" height="15" viewBox="0 0 15 15"><circle cx="5.8" cy="5.8" r="4.9" fill="none" stroke="#262626" stroke-width="1.5"/><path d="M9.4 9.4 L13.8 13.8" stroke="#262626" stroke-width="1.7" stroke-linecap="round"/></svg>
<div class="t" id="ts" style="left:454.2px;top:833px;font-size:13.9px;color:#5f5f5f;letter-spacing:-0.37px">Rechercher</div>
<!-- flower / skull / candle -->
<svg style="left:585.5px;top:826.5px" width="47" height="25" viewBox="0 0 47 25">
 <path d="M4.6 14 V20.6" stroke="#5a9a4a" stroke-width="1.3"/><path d="M4.6 17.4 C2.6 17.4 1.6 16.4 1.4 15.2 M4.6 18.4 C6.6 18.4 7.6 17.4 7.8 16.2" stroke="#5a9a4a" stroke-width="1.2" fill="none"/>
 <circle cx="4.7" cy="11" r="3.9" fill="#ea8a7c"/><circle cx="4.7" cy="11" r="1.8" fill="#f3a592"/>
 <path d="M11.8 10.4 a10.4 10 0 0 1 20.8 0 C32.6 14.6 30.6 17 28.6 18.4 V22.2 a2 2 0 0 1 -2 2 H17.8 a2 2 0 0 1 -2 -2 V18.4 C13.8 17 11.8 14.6 11.8 10.4 Z" fill="#eadcae"/>
 <path d="M17 21 H27.4 M18 19.4 V23 M20.2 19.4 V23 M22.2 19.4 V23 M24.2 19.4 V23 M26.2 19.4 V23" stroke="#c9b98a" stroke-width="0.7"/>
 <circle cx="16.8" cy="11" r="4.9" fill="#2f7fd2"/><circle cx="27.6" cy="11" r="4.9" fill="#2f7fd2"/>
 <circle cx="16.8" cy="11" r="2.2" fill="#1e56a8"/><circle cx="27.6" cy="11" r="2.2" fill="#1e56a8"/>
 <circle cx="16.8" cy="11" r="1.2" fill="#f2c53a"/><circle cx="27.6" cy="11" r="1.2" fill="#f2c53a"/>
 <path d="M22.2 14.6 L20.8 17.4 H23.6 Z" fill="#5a6a4a"/>
 <circle cx="22.2" cy="4" r="2.7" fill="#ee7f4a"/><circle cx="22.2" cy="4" r="1.1" fill="#f6b04a"/>
 <circle cx="13.6" cy="16" r="1.1" fill="#f0a08a"/><circle cx="30.8" cy="16" r="1.1" fill="#f0a08a"/>
 <rect x="35" y="10.4" width="7" height="11.6" rx="1.2" fill="#f1e3c0"/><path d="M38.6 3.6 C40.6 6 41 7.6 40.4 9 a2 2 0 0 1 -3.6 0 C36.2 7.6 36.8 6 38.6 3.6 Z" fill="#f59a22"/>
 <circle cx="43" cy="20" r="2.8" fill="#f5a623"/>
</svg>
<!-- task view -->
<svg style="left:649px;top:827px" width="24" height="23" viewBox="0 0 24 23"><rect x="0.2" y="7" width="17.6" height="15.8" rx="1.6" fill="url(#tTv)"/><rect x="6" y="0.4" width="17.6" height="15.8" rx="1.6" fill="#f4f4f4" opacity="0.78"/><rect x="6" y="7" width="11.8" height="9.2" fill="#c4c4c4" opacity="0.55"/></svg>
<!-- copilot -->
<svg style="left:692.8px;top:827.8px" width="24.2" height="21" viewBox="0 0 24.2 21"><path d="M6.7 15 H11.6 L10.4 18.8 C10 20.2 9 20.9 7.9 20.9 C6.7 20.9 6 20 6.3 18.8 Z" fill="#f0572e"/><path d="M15 6.1 H21.6 Q24.5 6.1 23.7 8.9 L21.1 18.3 Q20.4 21 17.7 21 H8.4 Q10.4 20.6 11 18.4 L13.4 9.4 Q14 7 15 6.1 Z" fill="url(#tCop2)"/><path d="M13 0 H15 C17 0 18 1.2 18.5 3 L19.2 5.8 H14.6 C13.4 5.8 12.6 6.2 12 7 Z" fill="#1c4fd2"/><path d="M6.5 0 H13.6 C14.8 0 15.2 0.8 14.9 2 L12.2 12 C11.6 14.2 10.4 15.2 8.4 15.2 H2.6 C0.8 15.2 -0.2 13.8 0.3 12 L3 3 C3.6 1 4.8 0 6.5 0 Z" fill="url(#tCop1)"/><path d="M12.6 6.4 H14.6 L12 15 H9.6 Q11 14.4 11.4 12.8 Z" fill="#fff" opacity="0.8"/></svg>
<!-- explorer -->
<div class="abs" style="left:729.6px;top:820px;width:38.8px;height:39px;border-radius:4px;background:#f9f9f9;border:1px solid #f3f3f3"></div>
<svg style="left:736.8px;top:828px" width="24.4" height="21.4" viewBox="0 0 24.4 21.4"><path d="M0 1.4 a1.4 1.4 0 0 1 1.4 -1.4 H7.4 a1.8 1.8 0 0 1 1.3 0.6 L10.2 2.4 H0 Z" fill="#e5a614"/><path d="M0 2.4 H23 a1.4 1.4 0 0 1 1.4 1.4 V20 a1.4 1.4 0 0 1 -1.4 1.4 H1.4 a1.4 1.4 0 0 1 -1.4 -1.4 Z" fill="url(#tFold)"/><path d="M0 2.4 H10.2 L9 3.4 a1.8 1.8 0 0 1 -1.2 0.4 H0 Z" fill="#e5a614"/><path d="M5 21.4 V17 a2.4 2.4 0 0 1 2.4 -2.4 H17 a2.4 2.4 0 0 1 2.4 2.4 V21.4 Z" fill="#1a76cf"/><rect x="5" y="18.2" width="14.4" height="1.6" fill="#0f5cad"/></svg>
<div class="abs" style="left:741.2px;top:855px;width:15.6px;height:3px;border-radius:1.5px;background:#0067c0"></div>
<!-- chrome -->
<svg style="left:781px;top:827px" width="24" height="24" viewBox="0 0 24 24"><circle cx="12" cy="12" r="12" fill="#fff"/><path d="M12 12 L1.61 6 A12 12 0 0 1 22.39 6 Z" fill="#e33b2e"/><path d="M12 12 L22.39 6 A12 12 0 0 1 12 24 Z" fill="#fbc116"/><path d="M12 12 L12 24 A12 12 0 0 1 1.61 6 Z" fill="#2da94f"/><path d="M12 6 H22.39 A12 12 0 0 0 1.61 6 L6.8 15 Z" fill="#e33b2e"/><path d="M17.2 15 L12 24 A12 12 0 0 0 22.39 6 H12 Z" fill="#fbc116"/><path d="M6.8 15 L1.61 6 A12 12 0 0 0 12 24 L17.2 15 Z" fill="#2da94f"/><circle cx="12" cy="12" r="5.6" fill="#fff"/><circle cx="12" cy="12" r="4.4" fill="#3b7ded"/></svg>
<!-- store -->
<svg style="left:825px;top:828px" width="23.4" height="23" viewBox="0 0 23.4 23"><path d="M6.4 6 V3 a2 2 0 0 1 2 -2 H15 a2 2 0 0 1 2 2 V6" fill="none" stroke="#3ab6ee" stroke-width="1.8"/><path d="M0 5.4 H23.4 V20 a3 3 0 0 1 -3 3 H3 a3 3 0 0 1 -3 -3 Z" fill="url(#tStore)"/><rect x="7" y="9" width="4.4" height="4.4" fill="#f25022"/><rect x="12.2" y="9" width="4.4" height="4.4" fill="#7fba00"/><rect x="7" y="14.2" width="4.4" height="4.4" fill="#00a4ef"/><rect x="12.2" y="14.2" width="4.4" height="4.4" fill="#ffb900"/></svg>
<!-- outlook -->
<svg style="left:868.6px;top:828px" width="24.8" height="22.6" viewBox="0 0 24.8 22.6"><path d="M6 5 L14.6 0.4 a1.6 1.6 0 0 1 1.5 0 L24 4.8 a1.6 1.6 0 0 1 0.8 1.4 V19.4 a2.4 2.4 0 0 1 -2.4 2.4 H8.4 a2.4 2.4 0 0 1 -2.4 -2.4 Z" fill="#1490df"/><path d="M15.4 0.2 L24.4 5.4 L15.4 11 Z" fill="#0f5fb4"/><path d="M6 11 H15.4 L24.8 6.4 V19.4 a2.4 2.4 0 0 1 -2.4 2.4 H8.4 a2.4 2.4 0 0 1 -2.4 -2.4 Z" fill="#28a8ea"/><path d="M24.8 10 L10 21.8 H22.4 a2.4 2.4 0 0 0 2.4 -2.4 Z" fill="#35c1f1"/><rect x="0" y="4.6" width="13.4" height="13.4" rx="1.6" fill="#0f6cbd"/><ellipse cx="6.7" cy="11.3" rx="3" ry="3.5" fill="none" stroke="#fff" stroke-width="1.6"/></svg>
<!-- tray -->
<svg style="left:1008.6px;top:835.4px" width="11" height="7" viewBox="0 0 11 7"><path d="M0.8 6 L5.5 1.2 L10.2 6" fill="none" stroke="#1a1a1a" stroke-width="1.4" stroke-linecap="round" stroke-linejoin="round"/></svg>
<svg style="left:1037.5px;top:831.5px" width="17.5" height="14.5" viewBox="0 0 17.5 14.5"><path d="M4.6 11.8 a3.4 3.4 0 0 1 -0.4 -6.7 a4.6 4.6 0 0 1 8.6 -0.6 a3.7 3.7 0 0 1 0.6 7.3 Z" fill="#8a8a8a"/><path d="M1.6 0.6 L15.8 13.8" stroke="#efefef" stroke-width="2.6"/><path d="M1.6 0.6 L15.8 13.8" stroke="#3a3a3a" stroke-width="1.1" stroke-linecap="round"/></svg>
<div class="t" id="tfra" style="left:1073.5px;top:835.4px;font-size:11px;color:#1a1a1a;letter-spacing:-0.50px">FRA</div>
<svg style="left:1113.6px;top:830.4px" width="17" height="16.6" viewBox="0 0 17 16.6"><path d="M10.4 2.6 H2 a1.4 1.4 0 0 0 -1.4 1.4 V11 a1.4 1.4 0 0 0 1.4 1.4 H12.6 M4.2 15.4 H9.8 M7 12.4 V15.4" fill="none" stroke="#1a1a1a" stroke-width="1.1" stroke-linecap="round"/><rect x="12.2" y="0.6" width="3.8" height="5.6" rx="1.2" fill="none" stroke="#1a1a1a" stroke-width="1.1"/><path d="M14.1 6.2 V15.6 H12.2" fill="none" stroke="#1a1a1a" stroke-width="1.1" stroke-linecap="round"/></svg>
<svg style="left:1137.6px;top:832.6px" width="17" height="12.6" viewBox="0 0 17 12.6"><path d="M0.6 4.2 H3 L6.6 0.8 V11.8 L3 8.4 H0.6 Z" fill="none" stroke="#1a1a1a" stroke-width="1.1" stroke-linejoin="round"/><path d="M9 3.8 a3.6 3.6 0 0 1 0 5 M11.4 1.8 a6.4 6.4 0 0 1 0 9 M13.8 0.4 a8.6 8.6 0 0 1 0 11.8" fill="none" stroke="#1a1a1a" stroke-width="1" stroke-linecap="round"/></svg>
<svg style="left:1161.6px;top:831.4px" width="16.6" height="12.8" viewBox="0 0 16.6 12.8"><rect x="1" y="3.6" width="12.6" height="8.4" rx="1.6" fill="none" stroke="#1a1a1a" stroke-width="1.2"/><rect x="2.8" y="5.4" width="9" height="4.8" rx="0.6" fill="#1a1a1a"/><path d="M13.8 6 H15 a0.9 0.9 0 0 1 0.9 0.9 V8.7 a0.9 0.9 0 0 1 -0.9 0.9 H13.8" fill="#1a1a1a"/><path d="M3.2 0.2 L1 4.6 H3.4 L2.4 8 L6.2 3.4 H3.6 L5.2 0.2 Z" fill="#1a1a1a" stroke="#efefef" stroke-width="0.6"/></svg>
<div class="t" id="tt1" style="left:1228.1px;top:825.4px;font-size:11.6px;color:#1a1a1a;letter-spacing:-0.08px">13:54</div>
<div class="t" id="tt2" style="left:1194.5px;top:841.4px;font-size:11.6px;color:#1a1a1a;letter-spacing:0.57px">01/11/2025</div>
</body>
</html>
